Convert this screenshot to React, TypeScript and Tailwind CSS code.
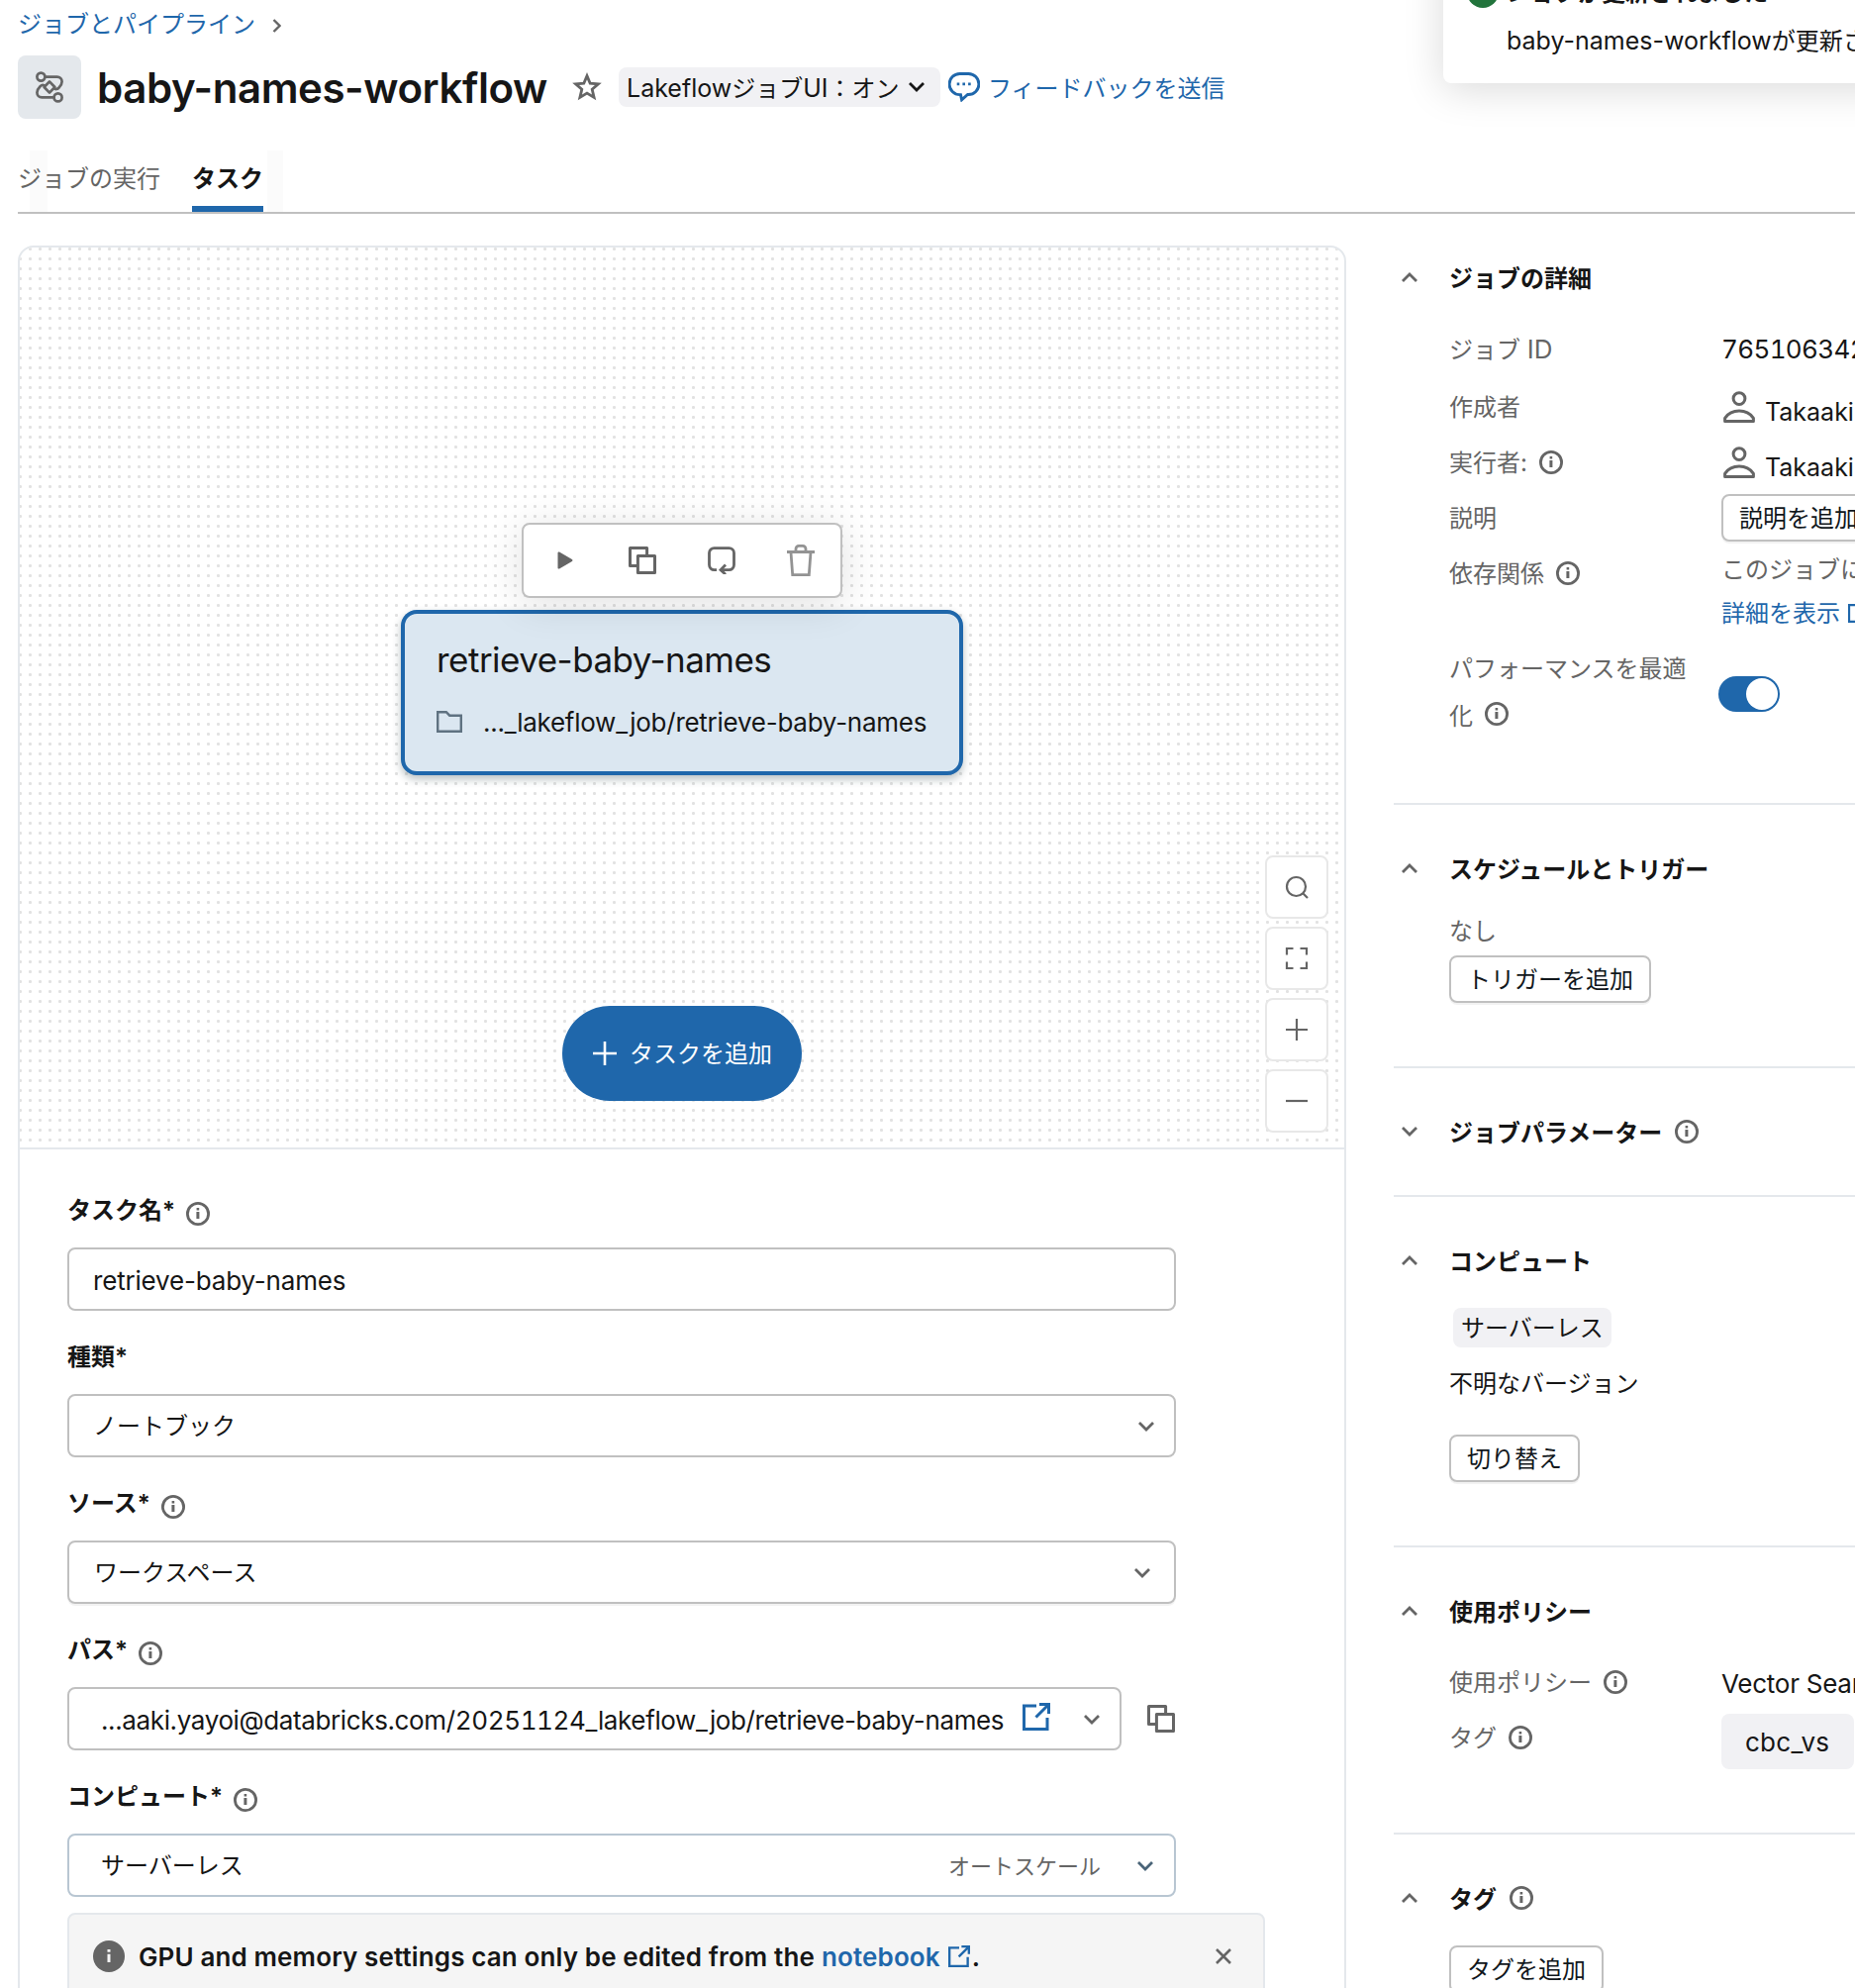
import type { ReactNode } from "react";

type IconProps = { className?: string };

function InfoIcon({ className = "" }: IconProps) {
  return (
    <svg viewBox="0 0 24 24" className={`size-6 shrink-0 text-[#656565] ${className}`} fill="none">
      <circle cx="12" cy="12" r="10.6" stroke="currentColor" strokeWidth="2.8" />
      <path d="M10.6 6h2.6v2.4h-2.6zM10.4 10h3v7h-3z" fill="currentColor" />
    </svg>
  );
}

function Chevron({ up = false, className = "text-[#656565]" }: { up?: boolean; className?: string }) {
  return (
    <svg viewBox="0 0 16 10" className={`h-2.5 w-4 shrink-0 ${className}`} fill="none">
      <path d={up ? "M1 9l7-7 7 7" : "M1 1l7 7 7-7"} stroke="currentColor" strokeWidth="2.8" />
    </svg>
  );
}

function ExternalIcon({ className = "" }: IconProps) {
  return (
    <svg viewBox="0 0 28 28" className={`shrink-0 ${className}`} fill="none" stroke="currentColor" strokeWidth="3">
      <path d="M14 3H1.5v23.5h23.5V15" />
      <path d="M17 1.5h9.5V11M26 2L13.5 14.5" />
    </svg>
  );
}

function CopyIcon({ className = "" }: IconProps) {
  return (
    <svg viewBox="0 0 28 28" className={`size-7 shrink-0 text-[#656565] ${className}`} fill="none" stroke="currentColor" strokeWidth="3">
      <path d="M8.5 19.6H1.5V1.5h17.1v7.1" strokeLinejoin="round" />
      <path d="M9.4 9.4h17.1v17.1H9.4z" strokeLinejoin="round" />
    </svg>
  );
}

function PersonIcon() {
  return (
    <svg viewBox="0 0 32 32" className="size-8 shrink-0 text-[#656565]" fill="none" stroke="currentColor" strokeWidth="3">
      <circle cx="16" cy="7.6" r="5.9" />
      <path d="M1.6 30.5v-3.2c3.2-4.6 8.4-7.2 14.4-7.2s11.2 2.6 14.4 7.2v3.2z" strokeLinejoin="round" />
    </svg>
  );
}

function WorkflowIcon() {
  return (
    <svg viewBox="0 0 28 32" className="h-8 w-7 text-[#656565]" fill="none" stroke="currentColor" strokeWidth="2.7">
      <circle cx="5.4" cy="5.6" r="4" />
      <circle cx="22.6" cy="26.4" r="4" />
      <path d="M14 10.4L19.4 16 14 21.6 8.6 16z" strokeLinejoin="round" />
      <path d="M18.4 17C20 18.6 22 18.2 23.4 16.8c2.8-2.8 3.2-4.3 3.2-6.3a4.9 4.9 0 0 0-4.9-4.9H9.4" />
      <path d="M9.6 15C8 13.4 6 13.8 4.6 15.2 1.8 18 1.4 19.5 1.4 21.5a4.9 4.9 0 0 0 4.9 4.9h12.3" />
    </svg>
  );
}

function StarIcon() {
  return (
    <svg viewBox="0 0 30 30" className="size-[30px] text-[#656565]" fill="none">
      <path d="M15 3.6l3.2 7.6 8.2.7-6.2 5.4 1.9 8.1-7.1-4.3-7.1 4.3 1.9-8.1-6.2-5.4 8.2-.7z" stroke="currentColor" strokeWidth="2.8" />
    </svg>
  );
}

function CommentIcon() {
  return (
    <svg viewBox="0 0 32 30" className="h-[30px] w-8" fill="none">
      <path d="M12.5 22.6H11.6A10.1 10.1 0 0 1 11.6 1.5h8.8a10.5 10.5 0 0 1 0 21h-.8l-6 5.3z" stroke="currentColor" strokeWidth="2.9" />
      <path d="M8.7 10.6h2.6v2.6H8.7zM14.4 10.6H17v2.6h-2.6zM20.1 10.6h2.6v2.6h-2.6z" fill="currentColor" />
    </svg>
  );
}

function NodeToolbar() {
  return (
    <div className="absolute left-[507px] top-[278px] flex h-[76px] w-[324px] items-center rounded-lg border-2 border-[#c0c0c0] bg-white text-[#656565] shadow-[0_6px_40px_rgba(0,0,0,0.12)]">
      <div className="flex w-20 justify-center pl-[3px]">
        <svg viewBox="0 0 16 18" className="h-[18px] w-4" fill="currentColor">
          <path d="M.5 1.5c0-1 .8-1.4 1.6-.9l12.8 7.4c.8.5.8 1.5 0 2L2.1 17.4c-.8.5-1.6.1-1.6-.9z" />
        </svg>
      </div>
      <div className="flex w-20 justify-center">
        <CopyIcon />
      </div>
      <div className="flex w-20 justify-center">
        <svg viewBox="0 0 28 28" className="size-7" fill="none" stroke="currentColor" strokeWidth="2.8">
          <path d="M9 23.6H6.5a5 5 0 0 1-5-5V6.6a5 5 0 0 1 5-5h15a5 5 0 0 1 5 5v12a5 5 0 0 1-5 5H14" />
          <path d="M18 18.6l-5 5 5 4.6" />
        </svg>
      </div>
      <div className="flex w-20 justify-center text-[#939393]">
        <svg viewBox="0 0 28 32" className="h-8 w-7" fill="none" stroke="currentColor" strokeWidth="2.8">
          <path d="M0 7.5h28M9 7V4.4A3 3 0 0 1 12 1.4h4a3 3 0 0 1 3 3V7M4 8l1.7 22.6h16.6L24 8" />
        </svg>
      </div>
    </div>
  );
}

function ZoomButton({ children }: { children: ReactNode }) {
  return (
    <button className="flex size-16 items-center justify-center rounded-lg border-2 border-[#e8e8e8] bg-white text-[#656565]">
      <svg viewBox="0 0 24 24" className="size-6" fill="none" stroke="currentColor" strokeWidth="2.2">
        {children}
      </svg>
    </button>
  );
}

function Canvas() {
  return (
    <div className="relative h-[911px] border-b-2 border-[#e4e8ec] bg-[radial-gradient(circle_at_5.5px_5.5px,#e2e2e2_1.2px,transparent_1.9px)] bg-[size:10px_10px] bg-[position:-5px_-4px]">
      {/* selected task node */}
      <div className="absolute left-[385px] top-[366px] h-[167px] w-[568px] rounded-2xl border-4 border-[#1f67ab] bg-[#dbe7f1] px-8 pt-[26px] shadow-[0_4px_8px_rgba(27,49,57,0.3)]">
        <div className="h-10 text-[35px] leading-10 tracking-[-0.015em]">retrieve-baby-names</div>
        <div className="mt-[27px] flex h-8 items-center">
          <svg viewBox="0 0 26 22" className="h-[22px] w-[26px] text-[#5f7281]" fill="none" stroke="currentColor" strokeWidth="2.4">
            <path d="M1.2 1.2h8.6l3.4 3.5h11.6v16.1H1.2z" />
          </svg>
          <span className="ml-[21px] pt-px text-[26px] tracking-[-0.01em] whitespace-nowrap">..._lakeflow_job/retrieve-baby-names</span>
        </div>
      </div>
      <NodeToolbar />
      <button className="absolute left-[548px] top-[766px] flex h-24 w-[242px] items-center rounded-full bg-[#1f67ab] pl-[31px] text-white">
        <svg viewBox="0 0 24 24" className="size-6" stroke="currentColor" strokeWidth="2.6">
          <path d="M12 0v24M0 12h24" />
        </svg>
        <span className="ml-[13px] pt-0.5">タスクを追加</span>
      </button>
      <div className="absolute left-[1258px] top-[614px] flex flex-col gap-2">
        <ZoomButton>
          <circle cx="11.5" cy="11.5" r="9.5" />
          <path d="M18 18l5 5" />
        </ZoomButton>
        <ZoomButton>
          <path d="M2 8.5V2h6.5M15.5 2H22v6.5M22 15.5V22h-6.5M8.5 22H2v-6.5" />
        </ZoomButton>
        <ZoomButton>
          <path d="M12 1v22M1 12h22" />
        </ZoomButton>
        <ZoomButton>
          <path d="M1 12h22" />
        </ZoomButton>
      </div>
    </div>
  );
}

function Field({ label, info = true, children }: { label: string; info?: boolean; children: ReactNode }) {
  return (
    <div className="flex h-[148px] flex-col pt-[22px]">
      <div className="flex h-12 items-center font-semibold">
        <span className="pt-0.5">{label}*</span>
        {info && <InfoIcon className="ml-[11px] mt-2" />}
      </div>
      <div className="mt-3.5 flex items-center">{children}</div>
    </div>
  );
}

function TaskForm() {
  const box = "flex h-16 items-center rounded-lg border-2 bg-white pt-0.5";
  return (
    <div className="pt-[15px] pl-12">
      <Field label="タスク名">
        <div className={`${box} w-[1120px] border-[#c0c0c0] pl-6 text-[26px] tracking-[-0.007em]`}>retrieve-baby-names</div>
      </Field>
      <Field label="種類" info={false}>
        <div className={`${box} w-[1120px] justify-between border-[#c0c0c0] pr-5 pl-6`}>
          <span>ノートブック</span>
          <Chevron />
        </div>
      </Field>
      <Field label="ソース">
        <div className={`${box} w-[1120px] justify-between border-[#c0c0c0] pr-6 pl-[25px] shadow-[0_2px_0_rgba(0,0,0,0.05)]`}>
          <span>ワークスペース</span>
          <Chevron />
        </div>
      </Field>
      <Field label="パス">
        <div className={`${box} w-[1065px] border-[#c0c0c0] pr-5 pl-8`}>
          <span className="text-[26px] tracking-[-0.0145em] whitespace-nowrap">
            ...aaki.yayoi@databricks.com/<span className="tabular-nums">20251124</span>_lakeflow_job/retrieve-baby-names
          </span>
          <ExternalIcon className="mb-1.5 ml-auto size-7 text-[#1f67ab]" />
          <Chevron className="ml-[34px] text-[#656565]" />
        </div>
        <CopyIcon className="ml-[26px]" />
      </Field>
      <Field label="コンピュート">
        <div className={`${box} w-[1120px] border-[#b8c6d2] pr-[21px] pl-8`}>
          <span>サーバーレス</span>
          <span className="ml-auto text-[22px] text-[#656565]">オートスケール</span>
          <Chevron className="ml-[37px] text-[#4a6478]" />
        </div>
      </Field>
      <div className="mt-4 flex h-24 w-[1210px] items-start rounded-lg border-2 border-[#e4e8ec] bg-[#f5f5f5] pt-6 pr-8 pl-6">
        <svg viewBox="0 0 32 32" className="mt-0.5 size-8 shrink-0">
          <circle cx="16" cy="16" r="16" fill="#656565" />
          <path d="M14.5 9h3v2.8h-3zM14.5 13.8h3V22h-3z" fill="#f5f5f5" />
        </svg>
        <p className="ml-3.5 flex h-9 items-center text-[26px] font-semibold tracking-[0.005em] whitespace-nowrap">
          GPU and memory settings can only be edited from the
          <span className="ml-[7px] text-[#1f67ab]">notebook</span>
          <ExternalIcon className="ml-2 size-[22px] text-[#1f67ab]" />
          <span className="ml-0.5">.</span>
        </p>
        <svg viewBox="0 0 16 16" className="mt-2.5 ml-auto size-4 text-[#656565]" stroke="currentColor" strokeWidth="2.6">
          <path d="M1 1l14 14M15 1L1 15" />
        </svg>
      </div>
    </div>
  );
}

type SectionProps = { title: string; open?: boolean; info?: boolean; className?: string; children?: ReactNode };

function Section({ title, open = true, info = false, className = "", children }: SectionProps) {
  return (
    <section className={`border-[#e4e8ec] pt-[41px] pl-2 ${className}`}>
      <div className="flex h-12 items-center">
        <Chevron up={open} className="mb-0.5 text-[#656565]" />
        <h2 className="ml-8 pt-px font-semibold">{title}</h2>
        {info && <InfoIcon className="mb-0.5 ml-[13px]" />}
      </div>
      <div className="pl-12">{children}</div>
    </section>
  );
}

type RowProps = { label: ReactNode; info?: boolean; className?: string; children?: ReactNode };

function Row({ label, info = false, className = "h-14", children }: RowProps) {
  return (
    <div className={`flex ${className}`}>
      <div className="flex h-14 w-[275px] shrink-0 items-center text-[#656565]">
        <span>{label}</span>
        {info && <InfoIcon className="mb-0.5 ml-3" />}
      </div>
      {children}
    </div>
  );
}

function SmallButton({ children, className = "" }: { children: ReactNode; className?: string }) {
  return (
    <button className={`flex h-12 w-fit items-center rounded-lg border-2 border-[#c0c0c0] bg-white px-4 pt-0.5 whitespace-nowrap text-[#11171c] shadow-[0_2px_0_rgba(0,0,0,0.05)] ${className}`}>
      {children}
    </button>
  );
}

function Sidebar() {
  return (
    <aside className="ml-12 w-[560px] shrink-0">
      <Section title="ジョブの詳細" className="h-[595px]">
        <Row label={<>ジョブ <span className="text-[26px]">ID</span></>} className="mt-[19px] mb-1 h-14 items-center">
          <span className="text-[26px] tabular-nums tracking-[-0.025em]">765106342</span>
        </Row>
        {["作成者", "実行者:"].map((label) => (
          <Row key={label} label={label} info={label === "実行者:"}>
            <div className="flex items-start pt-[11px] pl-0.5">
              <PersonIcon />
              <span className="ml-2.5 text-[25px] leading-[42px]">Takaaki</span>
            </div>
          </Row>
        ))}
        <Row label="説明">
          <SmallButton className="mt-[3px]">説明を追加</SmallButton>
        </Row>
        <Row label="依存関係" info className="h-[100px]">
          <div className="pt-0.5 leading-[44px] whitespace-nowrap">
            <div className="text-[#656565]">このジョブには系列</div>
            <div className="flex items-center text-[#1f67ab]">
              詳細を表示
              <ExternalIcon className="mb-0.5 ml-2 size-5" />
            </div>
          </div>
        </Row>
        <div className="flex">
          <div className="w-[240px] leading-[48px] text-[#656565]">
            パフォーマンスを最適化
            <InfoIcon className="ml-3 inline-block align-[-1px]" />
          </div>
          <div className="mt-[31px] ml-8 flex h-9 w-[62px] items-center justify-end rounded-full bg-[#1f67ab] pr-0.5">
            <div className="size-8 rounded-full bg-white" />
          </div>
        </div>
      </Section>

      <Section title="スケジュールとトリガー" className="h-[266px] border-t-2">
        <div className="mt-[15px] h-12 leading-[48px] text-[#656565]">なし</div>
        <SmallButton>トリガーを追加</SmallButton>
      </Section>

      <Section title="ジョブパラメーター" open={false} info className="h-[130px] border-t-2" />

      <Section title="コンピュート" className="h-[354px] border-t-2">
        <div className="mt-[23px] ml-1 flex h-10 w-40 items-center rounded-lg bg-[#f1f1f4] px-2 pt-0.5">サーバーレス</div>
        <div className="mt-[13px] h-12 leading-[48px]">不明なバージョン</div>
        <SmallButton className="mt-[27px]">切り替え</SmallButton>
      </Section>

      <Section title="使用ポリシー" className="h-[290px] border-t-2">
        <Row label="使用ポリシー" info className="mt-5 h-14 items-center">
          <span className="text-[26px] tracking-[-0.01em] whitespace-nowrap">Vector Search</span>
        </Row>
        <Row label="タグ" info>
          <div className="mt-[3px] flex h-14 w-[134px] items-center rounded-lg bg-[#f1f1f4] pl-6 text-[26px] tracking-[0.01em]">cbc_vs</div>
        </Row>
      </Section>

      <Section title="タグ" info className="border-t-2">
        <SmallButton className="mt-[23px]">タグを追加</SmallButton>
      </Section>
    </aside>
  );
}

export default function App() {
  return (
    <div
      lang="ja"
      className="relative h-[2008px] w-[1874px] overflow-hidden bg-white font-['Inter','Noto_Sans_CJK_JP',sans-serif] text-[24px] text-[#161616]"
    >
      <header className="h-[216px] pl-[18px]">
        <div className="flex h-12 items-center pt-0.5 text-[#1f67ab]">
          ジョブとパイプライン
          <svg viewBox="0 0 9 14" className="ml-[17px] mt-0.5 h-3.5 w-[9px] text-[#656565]" fill="none" stroke="currentColor" strokeWidth="2.4">
            <path d="M1.5 1l6 6-6 6" />
          </svg>
        </div>
        <div className="mt-2 flex h-16 items-center">
          <div className="flex size-16 items-center justify-center rounded-lg bg-[#e4e8ec]">
            <WorkflowIcon />
          </div>
          <h1 className="ml-4 w-[480px] pt-px text-[42px] font-semibold tracking-[-0.01em] whitespace-nowrap">baby-names-workflow</h1>
          <StarIcon />
          <div className="ml-[17px] flex h-10 w-[325px] items-center rounded-lg bg-[#f1f1f4] pl-2 whitespace-nowrap">
            <span className="pt-[3px]">
              <span className="text-[25px]">Lakeflow</span>ジョブ<span className="text-[25px]">UI</span>：オン
            </span>
            <Chevron className="ml-[9px] text-[#161616]" />
          </div>
          <a className="ml-2 flex items-center text-[#1f67ab]">
            <CommentIcon />
            <span className="ml-2 pt-[3px]">フィードバックを送信</span>
          </a>
        </div>
        <nav className="relative mt-[30px] flex h-[66px] gap-8 border-b-2 border-[#c0c0c0] text-[#656565]">
          <div className="absolute left-3 top-0.5 h-[62px] w-[18px] bg-black/[0.015]" />
          <div className="absolute left-[252px] top-0.5 h-[62px] w-4 bg-black/[0.015]" />
          <div className="leading-[62px]">ジョブの実行</div>
          <div className="border-b-[6px] border-[#1f67ab] font-semibold leading-[62px] text-[#161616]">タスク</div>
        </nav>
      </header>

      <main className="flex pl-[18px]">
        <div className="mt-8 h-[1780px] w-[1342px] shrink-0 overflow-hidden rounded-2xl border-2 border-[#e4e8ec]">
          <Canvas />
          <TaskForm />
        </div>
        <Sidebar />
      </main>

      {/* toast sits above the page, cut off by the window edge */}
      <div className="absolute -top-16 left-[1458px] h-[148px] w-[480px] rounded-lg bg-white pt-8 pl-6 whitespace-nowrap shadow-[0_6px_40px_rgba(0,0,0,0.15)]">
        <div className="flex h-12 items-center">
          <div className="size-8 rounded-full bg-[#22743c]" />
          <span className="ml-2 pt-0.5 font-semibold">ジョブが更新されました</span>
        </div>
        <div className="ml-10 h-12 pt-px leading-[48px]">
          <span className="text-[25px]">baby-names-workflow</span>が更新されました
        </div>
      </div>
    </div>
  );
}
